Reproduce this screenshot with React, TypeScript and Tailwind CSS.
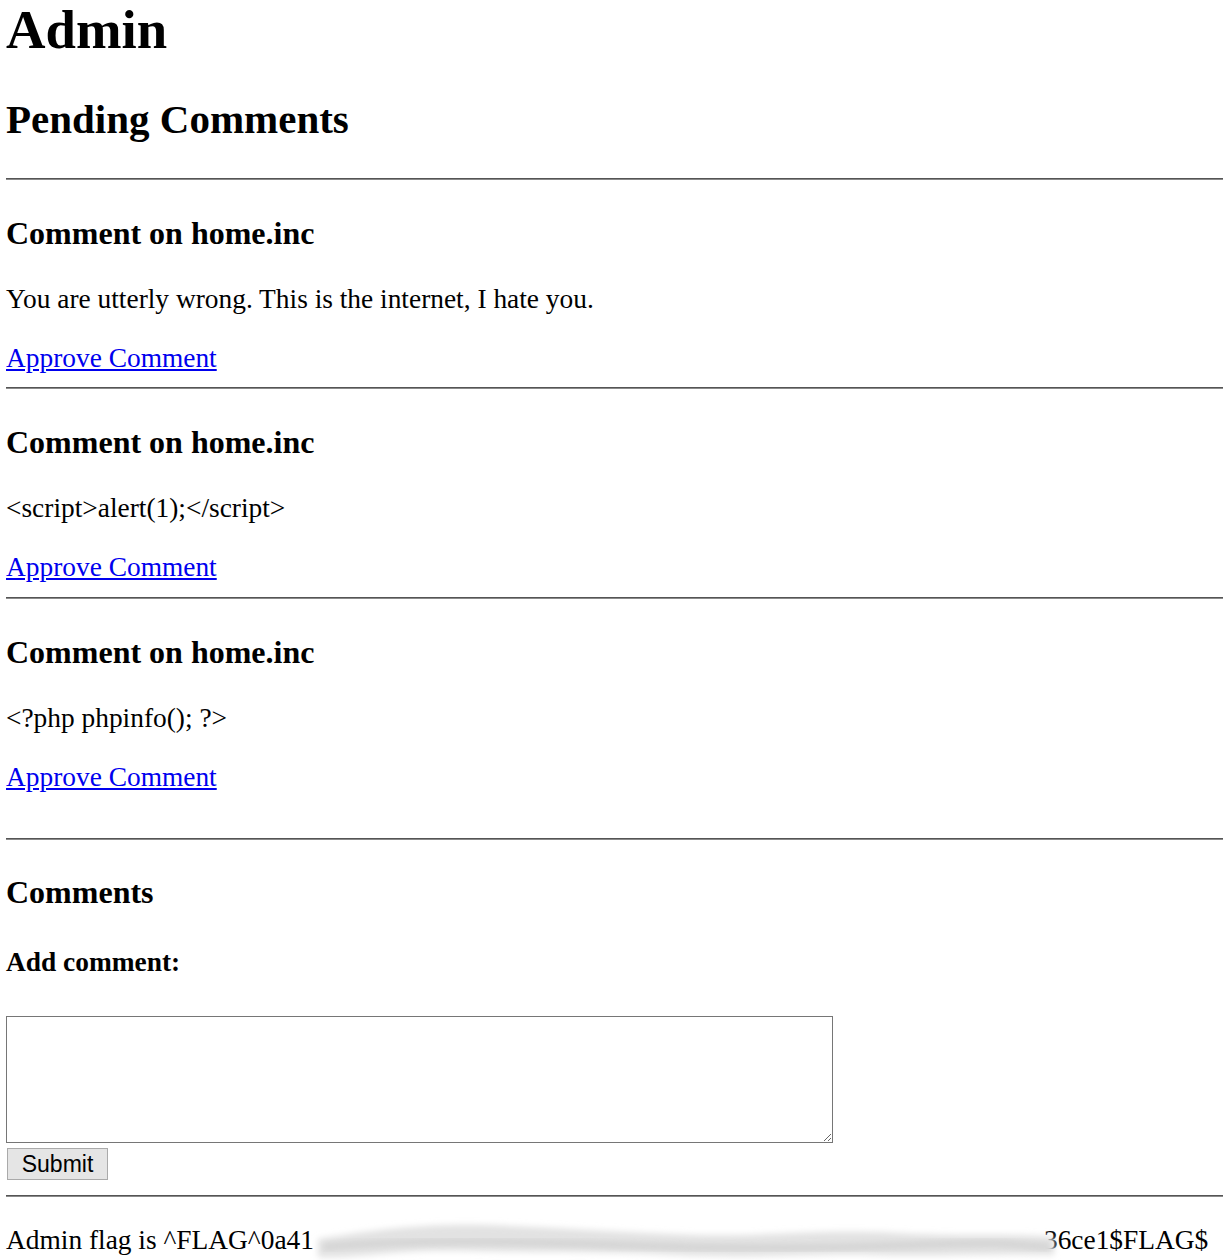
import React from 'react';

const pending = [
  'You are utterly wrong. This is the internet, I hate you.',
  '<script>alert(1);</script>',
  '<?php phpinfo(); ?>',
];

function Rule({ className = '' }: { className?: string }) {
  return <div className={`h-[2px] border-t border-b border-t-[#555555] border-b-[#8a8a8a] ${className}`} />;
}

function Smear() {
  return (
    <svg
      className="absolute left-[290px] top-[-8px] pointer-events-none"
      width="766"
      height="48"
      viewBox="0 0 766 48"
    >
      <defs>
        <filter id="blur" x="-10%" y="-50%" width="120%" height="200%">
          <feGaussianBlur stdDeviation="3" />
        </filter>
      </defs>
      <path
        d="M22 22 C 60 16, 120 6, 190 8 S 330 16, 400 18 S 520 12, 600 16 S 700 16, 758 20 L 758 38 C 700 36, 640 40, 580 38 S 460 42, 380 38 S 240 36, 170 34 S 60 42, 22 40 Z"
        fill="#e2e2e2"
        filter="url(#blur)"
      />
      <path
        d="M28 30 C 120 22, 220 24, 320 28 S 520 32, 620 28 S 710 28, 754 30"
        stroke="#cfcfcf"
        strokeWidth="5"
        fill="none"
        filter="url(#blur)"
      />
    </svg>
  );
}

export default function App() {
  return (
    <div className="min-h-[1260px] bg-white pl-[6px] font-['Liberation_Serif','Times_New_Roman',serif] text-black">
      <h1 className="pt-[3px] text-[54.7px] leading-[54px] font-bold">Admin</h1>
      <h2 className="mt-[38px] text-[41px] leading-[48px] font-bold">Pending Comments</h2>
      <Rule className="mt-[35px]" />

      {pending.map((text, i) => (
        <div key={i}>
          <h3 className="mt-[35px] text-[32px] leading-[36px] font-bold">Comment on home.inc</h3>
          <p className="mt-[33px] text-[27.4px] leading-[31px]">{text}</p>
          <div className="mt-[28px] text-[27.4px] leading-[31px]">
            <a href="#" className="text-[#0000ee] underline">
              Approve Comment
            </a>
          </div>
          {i < pending.length - 1 && <Rule className="mt-[13.4px]" />}
        </div>
      ))}

      <Rule className="mt-[45px]" />
      <h3 className="mt-[34px] text-[32px] leading-[36px] font-bold">Comments</h3>
      <h4 className="mt-[37px] text-[27.4px] leading-[31px] font-bold">Add comment:</h4>

      <form className="mt-[38px]" onSubmit={(e) => e.preventDefault()}>
        <textarea className="block w-[827px] h-[127px] border border-[#767676] bg-white resize" />
        <button
          type="submit"
          className="mt-[5px] ml-[1px] block w-[101px] h-[32px] border border-[#aaaaaa] bg-[#e5e5e5] font-['Liberation_Sans',Arial,sans-serif] text-[23px] leading-[28px] text-black"
        >
          Submit
        </button>
      </form>

      <Rule className="mt-[15px]" />
      <div className="relative mt-[28px] flex text-[27.4px] leading-[31px] whitespace-nowrap">
        <span>Admin flag is ^FLAG^0a41</span>
        <span className="inline-block w-[730px]" />
        <span>36ce1$FLAG$</span>
        <Smear />
      </div>
    </div>
  );
}
